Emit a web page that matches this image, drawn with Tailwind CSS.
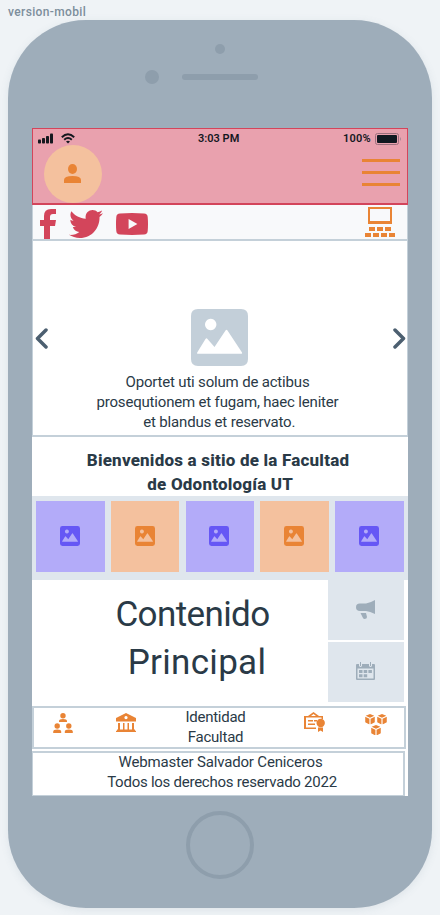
<!DOCTYPE html>
<html lang="es">
<head>
<meta charset="utf-8">
<title>version-mobil</title>
<script src="https://cdn.jsdelivr.net/npm/@tailwindcss/browser@4"></script>
</head>
<body class="w-[440px] h-[915px] overflow-hidden bg-[#eff3f6] text-[#2a3a47] font-['Roboto',sans-serif]">
<svg class="hidden">
  <symbol id="picture" viewBox="0 0 57 57"><path fill-rule="evenodd" d="M7 0H50Q57 0 57 7V50Q57 57 50 57H7Q0 57 0 50V7Q0 0 7 0ZM19.700 9.800a5.700 5.700 0 1 0 .01 0ZM6.500 44.700H50.500Q51.500 44.700 51 43.500L36.500 21.500Q35.500 20 34.500 21.500L23.500 38L16.500 30Q15.500 28.500 14.500 30L6.200 43.500Q5.800 44.700 6.500 44.700Z"/></symbol>
  <symbol id="cube" viewBox="0 0 10 11"><path d="M5 0L9.500 1.800L5 3.800L.5 1.800ZM0 2.900L4.400 4.900V11L0 8.700ZM10 2.900L5.600 4.900V11L10 8.700Z"/></symbol>
</svg>
<p class="h-5 pl-2 pt-1 text-xs leading-4 font-medium tracking-[0.36px] text-[#7d8e9c]">version-mobil</p>
<main class="mx-2 h-[888px] w-[424px] rounded-[78px] bg-[#9eadba] shadow-[0_2px_8px_rgba(100,120,140,0.12)] flex flex-col items-center">
  <div class="h-[108px] w-full pt-[24px]">
    <div class="mx-auto size-[10px] rounded-full bg-[#8e9eac]"></div>
    <div class="mt-4 ml-[137px] flex items-center gap-[23px]"><i class="size-[14px] rounded-full bg-[#8e9eac]"></i><i class="h-[6px] w-[76px] rounded-full bg-[#8e9eac]"></i></div>
  </div>
  <div class="flex h-[668px] w-[376px] shrink-0 flex-col bg-white">
    <header class="h-[77px] border border-b-2 border-[#d3455b] bg-[#e9a1ae]">
      <div class="flex h-[16px] items-center pt-[3px] text-[#14181f]">
        <div class="flex w-[165px] items-center gap-2 pl-[5px]">
          <svg class="h-[11px] w-[15px]" viewBox="0 0 15 11" fill="currentColor"><rect y="6.500" width="3" height="4" rx=".8"/><rect x="4" y="5" width="3" height="5.500" rx=".8"/><rect x="8" y="3" width="3" height="7.500" rx=".8"/><rect x="12" y=".5" width="3" height="10" rx=".8"/></svg>
          <svg class="h-[11px] w-[14px]" viewBox="0 0 14 11" fill="none" stroke="currentColor" stroke-width="1.900"><path d="M.8 4.200Q7-1.800 13.200 4.200M3.200 6.700Q7 3.200 10.800 6.700"/><path d="M5 8.500Q7 7 9 8.500L7 10.500Z" fill="currentColor" stroke="none"/></svg>
        </div>
        <span class="w-[43px] text-[11px] leading-[14px] font-semibold whitespace-nowrap">3:03 PM</span>
        <span class="ml-[102px] w-[32px] text-[11px] leading-[14px] font-semibold tracking-[0.2px]">100%</span>
        <svg class="h-3 w-[27px] shrink-0" viewBox="0 0 27 12"><rect x=".5" y=".5" width="23" height="11" rx="2" fill="none" stroke="#9c707d"/><rect x="2" y="2" width="20" height="8" rx="1" fill="#111820"/><path d="M25 4q2 2 0 4Z" fill="#a78794"/></svg>
      </div>
      <div class="flex h-[58px] items-start justify-between pl-[11px] pr-[7px]">
        <div class="flex size-[58px] items-center justify-center rounded-full bg-[#f4c19e] pr-px pb-px">
          <svg class="h-[19px] w-[17px]" viewBox="0 0 17 19" fill="#e98435"><ellipse cx="8.500" cy="5" rx="4.500" ry="5"/><path d="M0 19V16Q0 12 8.500 12T17 16V19Z"/></svg>
        </div>
        <div class="mt-[14px] flex w-[38px] flex-col gap-[9px]"><i class="h-[3px] bg-[#e98435]"></i><i class="h-[3px] bg-[#e98435]"></i><i class="h-[3px] bg-[#e98435]"></i></div>
      </div>
    </header>
    <nav class="flex h-[36px] items-start border-x border-b-2 border-[#c4d0d9] bg-[#f8f9fb] text-[#d3455b]">
      <svg class="mt-1 ml-[7px] h-[30px] w-4" viewBox="0 0 16 30" fill="currentColor"><path d="M0 11H4V7Q4 0 11 0H16V5H13Q10 5 10 8V11H16L15 17H10V30H4V17H0Z"/></svg>
      <svg class="mt-[5px] ml-[13px] h-[28px] w-[34px]" viewBox="0 48 512 416" preserveAspectRatio="none" fill="currentColor"><path d="M459.370 151.716c.325 4.548.325 9.097.325 13.645 0 138.720-105.583 298.558-298.558 298.558-59.452 0-114.680-17.219-161.137-47.106 8.447.974 16.568 1.299 25.340 1.299 49.055 0 94.213-16.568 130.274-44.832-46.132-.975-84.792-31.188-98.112-72.772 6.498.974 12.995 1.624 19.818 1.624 9.421 0 18.843-1.300 27.614-3.573-48.081-9.747-84.143-51.980-84.143-102.985v-1.299c13.969 7.797 30.214 12.670 47.431 13.319-28.264-18.843-46.781-51.005-46.781-87.391 0-19.492 5.197-37.360 14.294-52.954 51.655 63.675 129.300 105.258 216.365 109.807-1.624-7.797-2.599-15.918-2.599-24.040 0-57.828 46.782-104.934 104.934-104.934 30.213 0 57.502 12.670 76.670 33.137 23.715-4.548 46.456-13.320 66.599-25.340-7.798 24.366-24.366 44.833-46.132 57.827 21.117-2.273 41.584-8.122 60.426-16.243-14.292 20.791-32.161 39.308-52.628 54.253z"/></svg>
      <svg class="mt-2 ml-[13px] h-[22px] w-8" viewBox="0 0 32 22" fill="currentColor"><path fill-rule="evenodd" d="M4 .4Q16-.4 28 .4Q31.500.6 31.700 4Q32.300 11 31.700 18Q31.500 21.400 28 21.600Q16 22.400 4 21.600Q.5 21.400.3 18Q-.3 11 .3 4Q.5.6 4 .4ZM12.600 6V16L21.400 11Z"/></svg>
      <svg class="mt-[2px] mr-[12px] ml-auto h-[30px] w-[30px]" viewBox="0 0 30 30" fill="#e98435"><path fill-rule="evenodd" d="M3 0H27V17H3ZM5 2V14H25V2Z"/><path d="M4 20h6v4h-6zM12 20h6v4h-6zM20 20h6v4h-6zM0 26h6v4h-6zM8 26h6v4h-6zM16 26h6v4h-6zM24 26h6v4h-6z"/></svg>
    </nav>
    <section class="flex h-[196px] items-start justify-between border-x border-b-2 border-[#c4d0d9] px-[2px]">
      <svg class="mt-[87px] h-[21px] w-[13px]" viewBox="0 0 13 21" fill="none" stroke="#4c5f70" stroke-width="3.500" stroke-linecap="round" stroke-linejoin="round"><path d="M11 2L2.500 10.500L11 19"/></svg>
      <div class="mt-[68px] flex w-[260px] flex-col items-center pr-[2px]">
        <svg class="size-[57px]" fill="#c3cfd9"><use href="#picture"/></svg>
        <p class="mt-[6px] -ml-1 text-center text-[15px] leading-5 tracking-[-0.18px] whitespace-nowrap">Oportet uti solum de actibus<br>prosequtionem et fugam, haec leniter<br>&nbsp;et blandus et reservato.</p>
      </div>
      <svg class="mt-[87px] -mr-px h-[21px] w-[13px]" viewBox="0 0 13 21" fill="none" stroke="#4c5f70" stroke-width="3.500" stroke-linecap="round" stroke-linejoin="round"><path d="M2 2L10.500 10.500L2 19"/></svg>
    </section>
    <h1 class="h-[59px] pt-[11px] pr-1 text-center text-[17px] leading-6 font-extrabold tracking-[0.2px] whitespace-nowrap">Bienvenidos a sitio de la Facultad<br>&nbsp;de Odontología UT</h1>
    <section class="flex h-[84px] items-start justify-between bg-[#dfe6ed] pr-[4.500px] pl-1 pt-[5px]">
      <div class="flex h-[71px] w-[68.500px] items-center justify-center bg-[#b3abf9] pr-px pb-px"><svg class="size-5" fill="#6657f5"><use href="#picture"/></svg></div>
      <div class="flex h-[71px] w-[68.500px] items-center justify-center bg-[#f4c19e] pr-px pb-px"><svg class="size-5" fill="#e98435"><use href="#picture"/></svg></div>
      <div class="flex h-[71px] w-[68.500px] items-center justify-center bg-[#b3abf9] pr-px pb-px"><svg class="size-5" fill="#6657f5"><use href="#picture"/></svg></div>
      <div class="flex h-[71px] w-[68.500px] items-center justify-center bg-[#f4c19e] pr-px pb-px"><svg class="size-5" fill="#e98435"><use href="#picture"/></svg></div>
      <div class="flex h-[71px] w-[68.500px] items-center justify-center bg-[#b3abf9] pr-px pb-px"><svg class="size-5" fill="#6657f5"><use href="#picture"/></svg></div>
    </section>
    <section class="flex h-[126px]">
      <h2 class="w-[296px] pt-[11px] pl-[25px] text-center text-[35px] leading-[48px] tracking-[0.3px]"><span class="tracking-[-0.6px]">Contenido</span><br>&nbsp;Principal</h2>
      <aside class="flex w-[76px] flex-col gap-[2.500px] text-[#9eadba]">
        <div class="flex h-[59.500px] items-center justify-center bg-[#dfe6ed] pr-px pb-px"><svg class="h-[19px] w-[19px]" viewBox="0 0 19 19" fill="currentColor"><path d="M4 3.500H10Q14 3 19 0V14Q14 11.500 10 11H4Q0 11 0 7.200T4 3.500ZM4.500 13H10L11 17Q11 19 8.500 19Q7.500 19 7 18Z"/></svg></div>
        <div class="flex h-[59.500px] items-center justify-center bg-[#dfe6ed] pr-px pb-px"><svg class="h-[18px] w-[19px]" viewBox="0 0 19 18" fill="currentColor"><path fill-rule="evenodd" d="M0 3Q0 2 1 2H3V4Q4.500 6 6 4V2H13V4Q14.500 6 16 4V2H18Q19 2 19 3V17Q19 18 18 18H1Q0 18 0 17ZM1.500 6.500V16.500H17.500V6.500Z"/><path d="M4 0h1v4H4zM14 0h1v4h-1zM3 8h3.500v3H3zM7.700 8h3.500v3H7.700zM12.400 8h3.500v3h-3.500zM3 12.300h3.500v3H3zM7.700 12.300h3.500v3H7.700z"/></svg></div>
      </aside>
    </section>
    <section class="flex h-[43px] w-[374px] items-start border-2 border-[#c4d0d9] text-[#e98435]">
      <svg class="mt-[4.500px] ml-[19px] h-[20px] w-[20px]" viewBox="0 0 20 20" fill="currentColor"><circle cx="10" cy="2.700" r="2.700"/><circle cx="4.200" cy="13" r="2.700"/><circle cx="15.800" cy="13" r="2.700"/><path d="M6 9V8Q6 6 10 6T14 8V9ZM.2 20V18.500Q.2 16.500 4.200 16.500T8.200 18.500V20ZM11.800 20V18.500Q11.800 16.500 15.800 16.500T19.800 18.500V20Z"/></svg>
      <svg class="mt-[5px] ml-[43px] h-[19px] w-[20px]" viewBox="0 0 20 19" fill="currentColor"><path fill-rule="evenodd" d="M10 0L20 5V8.500H0V5ZM10 3a1.600 1.600 0 1 0 .01 0Z"/><path d="M2 10h2v7H2zM7 10h1.500v7H7zM11.500 10H13v7h-1.500zM16 10h2v7h-2zM1 16.500h18V18H1zM0 17.700h20V19H0z"/></svg>
      <p class="-mt-px ml-[38px] w-[83px] text-center text-[15px] leading-5 tracking-[-0.25px] text-[#2a3a47]">Identidad Facultad</p>
      <svg class="mt-[4px] ml-[47px] h-[20px] w-[21px] shrink-0" viewBox="0 0 21 20" fill="currentColor"><path d="M4 4L9.500 0L15 4H19V7H17.500V5.500H2V15.500H12V17H0V4ZM7 4H12L9.500 2ZM4 8h5v1.500H4zM10 8h3v1.500h-3zM4 11.500h7V13H4zM14 15.500H19V20L16.500 18.500L14 20Z" fill-rule="evenodd"/><circle cx="16.700" cy="11" r="4.200"/></svg>
      <div class="mt-[6px] ml-[40px] flex w-[22px] shrink-0 flex-wrap justify-center gap-x-[2px]"><svg class="h-[10.500px] w-[10px]" fill="currentColor"><use href="#cube"/></svg><svg class="h-[10.500px] w-[10px]" fill="currentColor"><use href="#cube"/></svg><svg class="h-[10.500px] w-[10px]" fill="currentColor"><use href="#cube"/></svg></div>
    </section>
    <footer class="mt-[2px] h-[45px] w-[373px] border-y border-t-2 border-r-2 border-l border-[#c4d0d9] pl-[9px] text-center text-[15px] leading-5 whitespace-nowrap"><p class="-mt-px -ml-1 tracking-[-0.17px]">Webmaster Salvador Ceniceros</p><p class="-ml-1 pl-[3px] tracking-[-0.25px]">Todos los derechos reservado 2022</p></footer>
  </div>
  <div class="mt-[15px] size-[68px] shrink-0 rounded-full border-4 border-[#8e9eac]"></div>
</main>
</body>
</html>
